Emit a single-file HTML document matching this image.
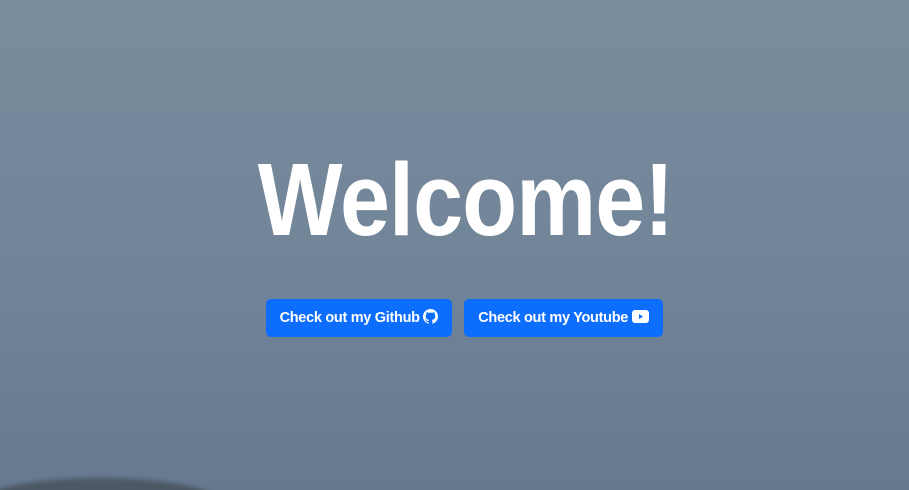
<!DOCTYPE html>
<html><head><style>
html,body{margin:0;padding:0;width:909px;height:490px;overflow:hidden}
body{position:relative;background:linear-gradient(#7a8d9e,#728599 50%,#66798f);font-family:"Liberation Sans",sans-serif}
h1{position:absolute;left:11px;width:909px;margin:0;text-align:center;color:#fff;font-weight:bold;font-size:103px;line-height:1;top:148px;transform:scaleX(0.872);letter-spacing:-1px}
.btn{position:absolute;top:299px;height:38px;background:#0d6efd;border-radius:5px;color:#fff;font-weight:bold;font-size:14.5px;line-height:38px;text-align:center;box-sizing:border-box;white-space:nowrap;letter-spacing:-0.3px}
.hill{position:absolute;left:-30px;top:478px;width:260px;height:30px;background:#46505a;border-radius:50% 50% 0 0/100% 100% 0 0;filter:blur(2px);opacity:.8}
</style></head><body>
<div class="hill"></div>
<h1>Welcome!</h1>
<div class="btn" style="left:266px;width:186px">Check out my Github <svg width="15" height="15" viewBox="0 0 16 16" style="vertical-align:-2px"><path fill="#fff" d="M8 0C3.58 0 0 3.58 0 8c0 3.540 2.29 6.53 5.47 7.59.4.07.55-.17.55-.38v-1.34c-2.23.48-2.7-1.07-2.7-1.07-.36-.92-.89-1.17-.89-1.170-.73-.5.06-.49.06-.49.8.06 1.23.83 1.23.83.71 1.22 1.870.87 2.33.66.07-.52.28-.87.51-1.07-1.78-.2-3.64-.89-3.64-3.95 0-.87.31-1.59.82-2.15-.08-.2-.36-1.02.08-2.12 0 0 .67-.21 2.2.82a7.6 7.6 0 0 1 4 0c1.53-1.04 2.2-.82 2.2-.82.44 1.1.16 1.92.08 2.12.51.56.82 1.27.82 2.15 0 3.07-1.87 3.75-3.65 3.95.29.25.54.73.54 1.48v2.2c0 .21.15.46.55.38A8 8 0 0 0 16 8c0-4.42-3.58-8-8-8z"/></svg></div>
<div class="btn" style="left:464px;width:199px">Check out my Youtube <svg width="17" height="13" viewBox="0 0 17 13" style="vertical-align:-1px"><rect x="0" y="0" width="17" height="13" rx="3" fill="#fff"/><path d="M7 4v5l4-2.5z" fill="#0d6efd"/></svg></div>
</body></html>
